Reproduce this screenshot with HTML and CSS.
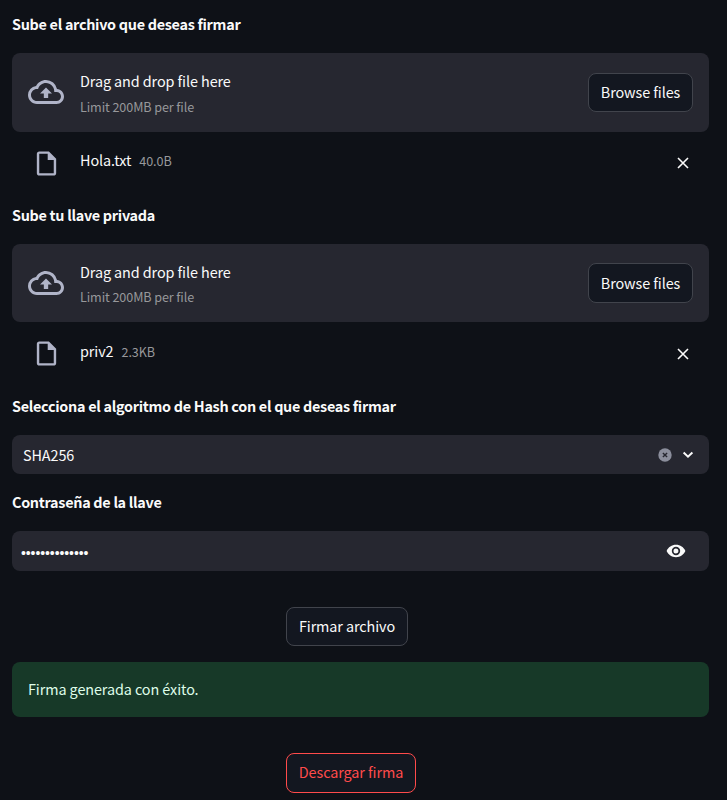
FILE: index.html
```html
<!DOCTYPE html>
<html lang="es">
<head>
<meta charset="utf-8">
<title>Firmar archivo</title>
<link rel="stylesheet" href="styles.css">
</head>
<body>
<svg width="0" height="0" class="sprite">
  <symbol id="cloud" viewBox="0 0 24 24"><path d="M19.35 10.04A7.49 7.49 0 0012 4C9.11 4 6.6 5.64 5.35 8.04A5.994 5.994 0 000 14c0 3.31 2.69 6 6 6h13c2.76 0 5-2.24 5-5 0-2.64-2.05-4.78-4.65-4.96zM19 18H6c-2.21 0-4-1.79-4-4s1.79-4 4-4h.71C7.37 7.69 9.48 6 12 6c3.04 0 5.5 2.46 5.5 5.5v.5H19c1.66 0 3 1.34 3 3s-1.34 3-3 3zM8 13h2.55v3h2.9v-3H16l-4-4z"/></symbol>
  <symbol id="file" viewBox="0 0 24 24"><path fill-rule="evenodd" d="M6 2c-1.1 0-2 .9-2 2v16c0 1.1.9 2 2 2h12c1.1 0 2-.9 2-2V8l-6-6H6zM6 4h7v5h5v11H6V4z"/></symbol>
  <symbol id="close" viewBox="0 0 12 12"><path d="M1 1l10 10M11 1L1 11" fill="none" stroke="currentColor" stroke-width="1.6"/></symbol>
</svg>
<main class="form">
  <h2 class="label">Sube el archivo que deseas firmar</h2>
  <section class="dropzone">
    <svg class="cloud"><use href="#cloud"/></svg>
    <div class="drop-text"><span class="drop-title">Drag and drop file here</span><span class="small">Limit 200MB per file</span></div>
    <button class="button browse">Browse files</button>
  </section>
  <div class="file-row">
    <svg class="file-icon"><use href="#file"/></svg>
    <div class="file-info"><span class="file-name">Hola.txt</span><span class="small">40.0B</span></div>
    <svg class="close"><use href="#close"/></svg>
  </div>

  <h2 class="label">Sube tu llave privada</h2>
  <section class="dropzone second">
    <svg class="cloud"><use href="#cloud"/></svg>
    <div class="drop-text"><span class="drop-title">Drag and drop file here</span><span class="small">Limit 200MB per file</span></div>
    <button class="button browse">Browse files</button>
  </section>
  <div class="file-row">
    <svg class="file-icon"><use href="#file"/></svg>
    <div class="file-info"><span class="file-name">priv2</span><span class="small">2.3KB</span></div>
    <svg class="close"><use href="#close"/></svg>
  </div>

  <h2 class="label">Selecciona el algoritmo de Hash con el que deseas firmar</h2>
  <div class="field select">
    <span class="value">SHA256</span>
    <svg class="clear" viewBox="0 0 14 14"><circle cx="7" cy="7" r="6.7" fill="#8b8e9c"/><path d="M4.9 4.9l4.2 4.2M9.1 4.9L4.9 9.1" stroke="#262730" stroke-width="1.4"/></svg>
    <svg class="chevron" viewBox="0 0 12 8"><path d="M1.6 1.6L6 5.7l4.4-4.1" fill="none" stroke="currentColor" stroke-width="2"/></svg>
  </div>

  <h2 class="label">Contraseña de la llave</h2>
  <div class="field password">
    <span class="dots">••••••••••••••</span>
    <svg class="eye" viewBox="0 0 20 14"><path fill-rule="evenodd" d="M10 .8C5.8.8 2.2 3.3.6 7c1.6 3.7 5.200 6.200 9.400 6.200s7.800-2.500 9.400-6.200C17.800 3.300 14.200.8 10 .8zm0 10.400a4.200 4.200 0 110-8.400 4.200 4.200 0 010 8.400zm0-6.700a2.500 2.500 0 100 5 2.500 2.500 0 000-5z"/></svg>
  </div>

  <button class="button sign">Firmar archivo</button>
  <div class="alert">Firma generada con éxito.</div>
  <button class="button download">Descargar firma</button>
</main>
</body>
</html>
```
FILE: styles.css
```css
* { box-sizing: border-box; }
body {
  margin: 0;
  height: 800px;
  overflow: hidden;
  background: #0e1117;
  color: #fafafa;
  font-family: "Noto Sans CJK JP", "Noto Sans", sans-serif;
  font-size: 14.4px;
  line-height: 24px;
  letter-spacing: -0.09px;
}
svg { display: block; flex: none; fill: currentColor; }
.sprite { position: absolute; }
.form { display: flex; flex-direction: column; width: 697px; margin-left: 12px; padding-top: 12px; }
.label { margin: 0 0 17px; font-size: 14.4px; font-weight: 700; line-height: 24px; letter-spacing: -0.29px; white-space: nowrap; }
.dropzone {
  display: flex;
  align-items: center;
  height: 79px;
  padding: 0 16px;
  border-radius: 8px;
  background: #262730;
}
.dropzone.second { height: 78px; }
.cloud { width: 36px; height: 36px; margin: -1px 16px 0 0; color: #b0b4c8; }
.second .cloud { margin-top: 0; }
.drop-text { display: flex; flex-direction: column; flex: 1; padding-top: 2px; }
.drop-title { line-height: 26px; }
.drop-text .small { line-height: 25px; }
.second .drop-title { line-height: 24px; }
.small { font-size: 12.6px; color: #97989b; }
.button {
  height: 39px;
  padding: 0 0 1px;
  border: 1px solid #41444c;
  border-radius: 8px;
  background: #131720;
  color: inherit;
  font: inherit;
  letter-spacing: inherit;
  white-space: nowrap;
}
.browse { width: 105px; padding-bottom: 2px; }
.second .browse { height: 40px; padding-bottom: 0; }
.file-row { display: flex; align-items: center; height: 62px; margin-bottom: 9px; padding: 0 20px; }
.dropzone.second + .file-row { height: 63px; }
.file-icon { width: 29px; height: 29px; margin-right: 19px; color: #b0b4c8; }
.file-info { display: flex; align-items: flex-start; padding-bottom: 4px; }
.file-name { margin: -1px 8px 0 0; }
.close { width: 12px; height: 12px; margin-left: auto; }
.field { display: flex; align-items: center; height: 39px; border-radius: 8px; background: #262730; }
.select { margin-bottom: 16px; padding: 0 15px 0 11px; }
.value { flex: 1; }
.clear { width: 14px; height: 14px; margin-right: 10px; }
.chevron { width: 12px; height: 8px; }
.password { height: 40px; padding: 0 23px 0 9px; }
.dots { flex: 1; padding-top: 4px; font-family: "Liberation Sans", sans-serif; font-size: 14px; }
.eye { width: 20px; height: 14px; }
.sign { width: 122px; margin: 36px 0 16px 274px; padding-bottom: 2px; }
.alert { height: 55px; padding: 15px 16px; border-radius: 8px; background: #173928; color: #dffde9; }
.download { width: 130px; height: 40px; margin: 36px 0 0 274px; padding-bottom: 2px; border-color: #ff4b4b; color: #ff4b4b; }
```
